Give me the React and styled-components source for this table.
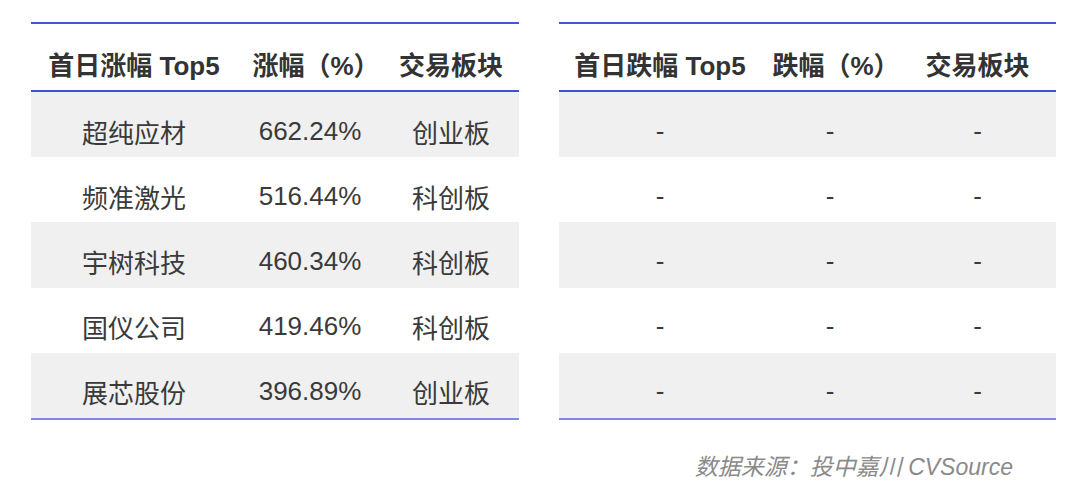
import { createGlobalStyle, styled } from "styled-components";

const GlobalStyle = createGlobalStyle`
  html, body {
    margin: 0;
    padding: 0;
    background: #ffffff;
  }
  body {
    font-family: "Liberation Sans", "Noto Sans CJK SC", sans-serif;
  }
`;

const gainers = [
  ["超纯应材", "662.24%", "创业板"],
  ["频准激光", "516.44%", "科创板"],
  ["宇树科技", "460.34%", "科创板"],
  ["国仪公司", "419.46%", "科创板"],
  ["展芯股份", "396.89%", "创业板"],
];

const losers = Array.from({ length: 5 }, () => ["-", "-", "-"]);

const StatTable = ({ headers, rows, cols, width }) => (
  <Table $cols={cols} $width={width}>
    <Head>
      {headers.map((h) => (
        <HeadCell key={h}>{h}</HeadCell>
      ))}
    </Head>
    {rows.map((r, i) => (
      <Row key={i} $shaded={i % 2 === 0}>
        {r.map((c, j) => (
          <Cell key={j}>{c}</Cell>
        ))}
      </Row>
    ))}
  </Table>
);

const App = () => {
  return (
    <Page>
      <GlobalStyle />
      <Tables>
        <StatTable
          headers={["首日涨幅 Top5", "涨幅（%）", "交易板块"]}
          rows={gainers}
          cols="206px 146px 136px"
          width={488}
        />
        <StatTable
          headers={["首日跌幅 Top5", "跌幅（%）", "交易板块"]}
          rows={losers}
          cols="202px 138px 157px"
          width={497}
        />
      </Tables>
      <Footer>数据来源：投中嘉川 CVSource</Footer>
    </Page>
  );
};
export default App;

const Page = styled.div`
  width: 1080px;
  height: 501px;
  box-sizing: border-box;
  padding: 22px 0 0 31px;
  overflow: hidden;
`;

const Tables = styled.div`
  display: flex;
  gap: 40px;
  align-items: flex-start;
`;

const Table = styled.div`
  width: ${(p) => p.$width}px;
  border-top: 2px solid #3f57d4;
  border-bottom: 2px solid #7f8ade;
  --cols: ${(p) => p.$cols};
`;

const Head = styled.div`
  display: grid;
  grid-template-columns: var(--cols);
  height: 68px;
  box-sizing: border-box;
  padding-top: 13px;
  border-bottom: 2px solid #3d55cc;
`;

const HeadCell = styled.div`
  display: flex;
  align-items: center;
  justify-content: center;
  font-size: 26px;
  font-weight: 700;
  color: #333333;
  white-space: nowrap;

  &:nth-child(2) {
    padding-left: 12px;
  }
`;

const Row = styled.div`
  display: grid;
  grid-template-columns: var(--cols);
  height: 65.2px;
  box-sizing: border-box;
  padding-top: 13px;
  background: ${(p) => (p.$shaded ? "#f0f0f0" : "#ffffff")};
`;

const Cell = styled.div`
  display: flex;
  align-items: center;
  justify-content: center;
  font-size: 26px;
  color: #3a3a3a;
  white-space: nowrap;
`;

const Footer = styled.div`
  width: 1025px;
  box-sizing: border-box;
  padding-right: 43px;
  margin-top: 30px;
  text-align: right;
  font-size: 23px;
  line-height: 34px;
  font-style: italic;
  color: #8a8a8a;
`;
